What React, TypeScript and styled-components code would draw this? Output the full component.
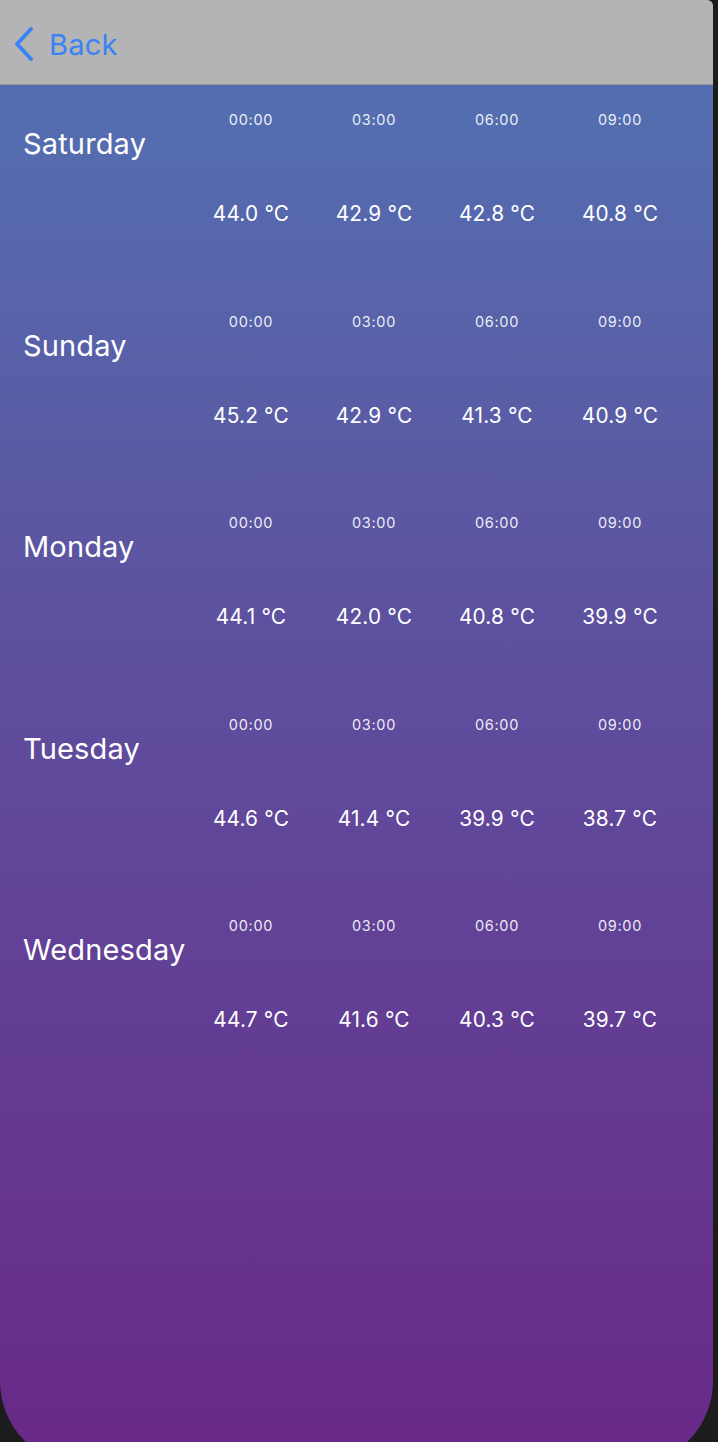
import React from "react";
import styled, { createGlobalStyle } from "styled-components";

const Global = createGlobalStyle`
  html, body {
    margin: 0;
    padding: 0;
    background: #1c1c1c;
    overflow: hidden;
  }
  body {
    font-family: Inter, "Noto Sans", "Liberation Sans", sans-serif;
    -webkit-font-smoothing: antialiased;
  }
`;

const Screen = styled.div`
  width: 713px;
  height: 1466px;
  display: flex;
  flex-direction: column;
  border-radius: 0 6px 85px 85px;
  overflow: hidden;
  background: linear-gradient(180deg, #5274b4 0%, #5e4f9e 45%, #692888 100%);
`;

const NavBar = styled.header`
  height: 84px;
  flex: 0 0 84px;
  background: #b4b4b4;
  border-bottom: 1px solid #979797;
  display: flex;
  align-items: center;
  padding-left: 12px;
  box-sizing: content-box;
`;

const BackButton = styled.button`
  display: flex;
  align-items: center;
  gap: 13px;
  background: none;
  border: none;
  padding: 0;
  color: #3a82f6;
  font-family: inherit;
  font-size: 29px;
  font-weight: 400;
  letter-spacing: 0.2px;
  cursor: pointer;
  margin-top: 4px;
`;

const List = styled.main`
  display: flex;
  flex-direction: column;
`;

const DayRow = styled.section`
  display: grid;
  grid-template-columns: 189.5px repeat(4, 123px);
  height: 201.6px;
  box-sizing: border-box;
  padding-top: 26px;
`;

const DayName = styled.div`
  padding-left: 23px;
  margin-top: 15px;
  color: #ffffff;
  font-size: 29px;
  line-height: 36px;
  height: 36px;
  letter-spacing: 0.15px;
`;

const Slot = styled.div`
  display: flex;
  flex-direction: column;
  align-items: center;
`;

const Time = styled.div`
  color: rgba(255, 255, 255, 0.9);
  font-size: 14.5px;
  line-height: 18px;
  letter-spacing: 0.7px;
`;

const Temp = styled.div`
  margin-top: 72px;
  color: #ffffff;
  font-size: 20.8px;
  line-height: 26px;
  letter-spacing: 0.2px;
`;

const times = ["00:00", "03:00", "06:00", "09:00"];

const data: { day: string; temps: string[] }[] = [
  { day: "Saturday", temps: ["44.0", "42.9", "42.8", "40.8"] },
  { day: "Sunday", temps: ["45.2", "42.9", "41.3", "40.9"] },
  { day: "Monday", temps: ["44.1", "42.0", "40.8", "39.9"] },
  { day: "Tuesday", temps: ["44.6", "41.4", "39.9", "38.7"] },
  { day: "Wednesday", temps: ["44.7", "41.6", "40.3", "39.7"] },
];

const Chevron = () => (
  <svg width="24" height="36" viewBox="0 0 24 36" fill="none">
    <path
      d="M19 3 L5 18 L19 33"
      stroke="#3a82f6"
      strokeWidth="4"
      strokeLinecap="round"
      strokeLinejoin="round"
    />
  </svg>
);

export default function App() {
  return (
    <>
      <Global />
      <Screen>
        <NavBar>
          <BackButton>
            <Chevron />
            Back
          </BackButton>
        </NavBar>
        <List>
          {data.map((d) => (
            <DayRow key={d.day}>
              <DayName>{d.day}</DayName>
              {d.temps.map((t, i) => (
                <Slot key={i}>
                  <Time>{times[i]}</Time>
                  <Temp>{t} °C</Temp>
                </Slot>
              ))}
            </DayRow>
          ))}
        </List>
      </Screen>
    </>
  );
}
